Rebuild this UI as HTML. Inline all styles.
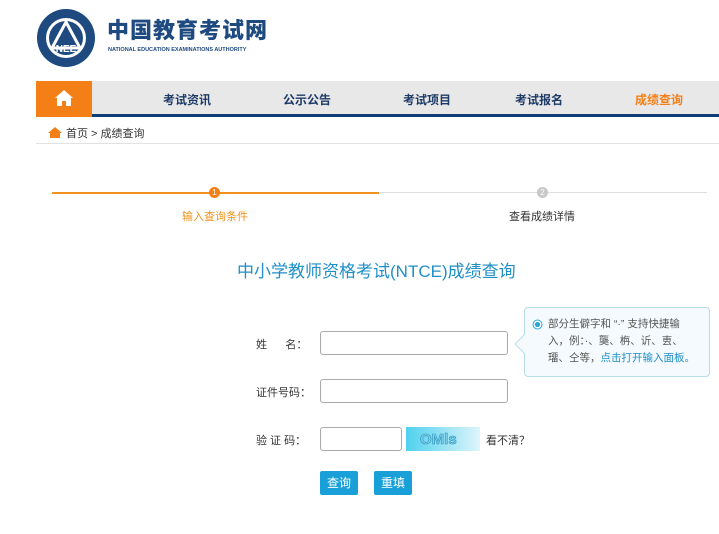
<!DOCTYPE html>
<html><head><meta charset="utf-8"><style>
*{margin:0;padding:0;box-sizing:border-box}
body{width:719px;height:534px;background:#fff;font-family:"Liberation Sans","Noto Sans CJK SC",sans-serif;position:relative;overflow:hidden;color:#333}
.a{position:absolute}
.nav{left:36px;top:81px;width:683px;height:36px;background:#e8e8e8;border-bottom:3px solid #0f3d76}
.nav span{position:absolute;top:10px;font-size:12px;font-weight:bold;color:#1d3a66}
.home{left:36px;top:81px;width:56px;height:36px;background:#f57f17}
input{position:absolute;height:24px;border:1px solid #aaa;border-radius:3px;background:#fff}
.lbl{font-size:11px;color:#333}
.btn{background:#19a0d8;color:#fff;font-size:12px;text-align:center;line-height:24px;border-radius:2px;width:38px;height:24px}
</style></head><body>
<svg class="a" style="left:36px;top:8px" width="60" height="60" viewBox="0 0 60 60">
<circle cx="30" cy="30" r="29" fill="#1e4a80"/><circle cx="30" cy="30" r="20" fill="#fff"/><circle cx="30" cy="30" r="17" fill="#1e4a80"/>
<path d="M30 14 L44 40 L16 40 Z" fill="none" stroke="#fff" stroke-width="3"/>
<text x="30" y="44" font-size="10" fill="#fff" text-anchor="middle" font-family="Liberation Sans" font-weight="bold">NEE</text></svg>
<div class="a" style="left:107px;top:17px;font-size:22px;font-weight:900;color:#1e4a80;letter-spacing:1px;line-height:28px;white-space:nowrap">中国教育考试网</div>
<div class="a" style="left:108px;top:47px;font-size:5.5px;font-weight:bold;color:#1e4a80;white-space:nowrap">NATIONAL EDUCATION EXAMINATIONS AUTHORITY</div>
<div class="a nav"><span style="left:127px">考试资讯</span><span style="left:247px">公示公告</span><span style="left:367px">考试项目</span><span style="left:479px">考试报名</span><span style="left:599px;color:#f57f17">成绩查询</span></div>
<div class="a home"><svg width="56" height="36"><path d="M28 9 L19 17 L21 17 L21 25 L26 25 L26 20 L30 20 L30 25 L35 25 L35 17 L37 17 Z" fill="#fff"/></svg></div>
<svg class="a" style="left:48px;top:126px" width="14" height="12"><path d="M7 1 L0 7 L2 7 L2 12 L12 12 L12 7 L14 7 Z" fill="#f57f17"/></svg>
<div class="a" style="left:66px;top:125px;font-size:11px;color:#333">首页 &gt; 成绩查询</div>
<div class="a" style="left:36px;top:143px;width:683px;height:1px;background:#e2e2e2"></div>
<div class="a" style="left:52px;top:192px;width:327px;height:2px;background:#f0921e"></div>
<div class="a" style="left:379px;top:192px;width:328px;height:1px;background:#ddd"></div>
<div class="a" style="left:209px;top:187px;width:11px;height:11px;border-radius:50%;background:#f57f17;color:#fff;font-size:8px;text-align:center;line-height:11px">1</div>
<div class="a" style="left:537px;top:187px;width:11px;height:11px;border-radius:50%;background:#c8c8c8;color:#fff;font-size:8px;text-align:center;line-height:11px">2</div>
<div class="a" style="left:182px;top:208px;font-size:11px;color:#f0921e">输入查询条件</div>
<div class="a" style="left:509px;top:208px;font-size:11px;color:#333">查看成绩详情</div>
<div class="a" style="left:237px;top:257px;font-size:17px;color:#1f8fc8">中小学教师资格考试(NTCE)成绩查询</div>
<div class="a lbl" style="left:256px;top:336px">姓&nbsp;&nbsp;&nbsp;&nbsp;&nbsp;&nbsp;名：</div>
<input style="left:320px;top:331px;width:188px">
<div class="a lbl" style="left:256px;top:384px">证件号码：</div>
<input style="left:320px;top:379px;width:188px">
<div class="a lbl" style="left:256px;top:432px">验&nbsp;证&nbsp;码：</div>
<input style="left:320px;top:427px;width:82px">
<svg class="a" style="left:406px;top:427px" width="74" height="24"><defs><linearGradient id="g"><stop offset="0" stop-color="#4fd1ef"/><stop offset="1" stop-color="#dff5fb"/></linearGradient></defs><rect width="74" height="24" fill="url(#g)"/><text x="14" y="17" font-size="15" font-weight="bold" fill="#7fd3ea" stroke="#2a8fb8" stroke-width=".6" font-family="Liberation Sans">OMls</text></svg>
<div class="a lbl" style="left:486px;top:432px">看不清？</div>
<div class="a btn" style="left:320px;top:471px">查询</div>
<div class="a btn" style="left:374px;top:471px">重填</div>
<div class="a" style="left:524px;top:307px;width:186px;height:70px;border:1px solid #b8dbe8;border-radius:4px;background:#f4fafd"></div>
<svg class="a" style="left:514px;top:334px" width="12" height="20"><path d="M11 0 L1 10 L11 20" fill="#f4fafd" stroke="#b8dbe8"/></svg>
<svg class="a" style="left:532px;top:319px" width="11" height="11"><circle cx="5.5" cy="5.5" r="4.5" fill="#fff" stroke="#2aa7d6"/><circle cx="5.5" cy="5.5" r="2.6" fill="#2aa7d6"/></svg>
<div class="a" style="left:548px;top:316px;width:160px;font-size:10.5px;line-height:17px;color:#555;white-space:nowrap">部分生僻字和 “·” 支持快捷输<br>入，例：·、龑、栴、䜣、叀、<br>璢、仝等，<span style="color:#1f8fc8">点击打开输入面板。</span></div>
</body></html>
